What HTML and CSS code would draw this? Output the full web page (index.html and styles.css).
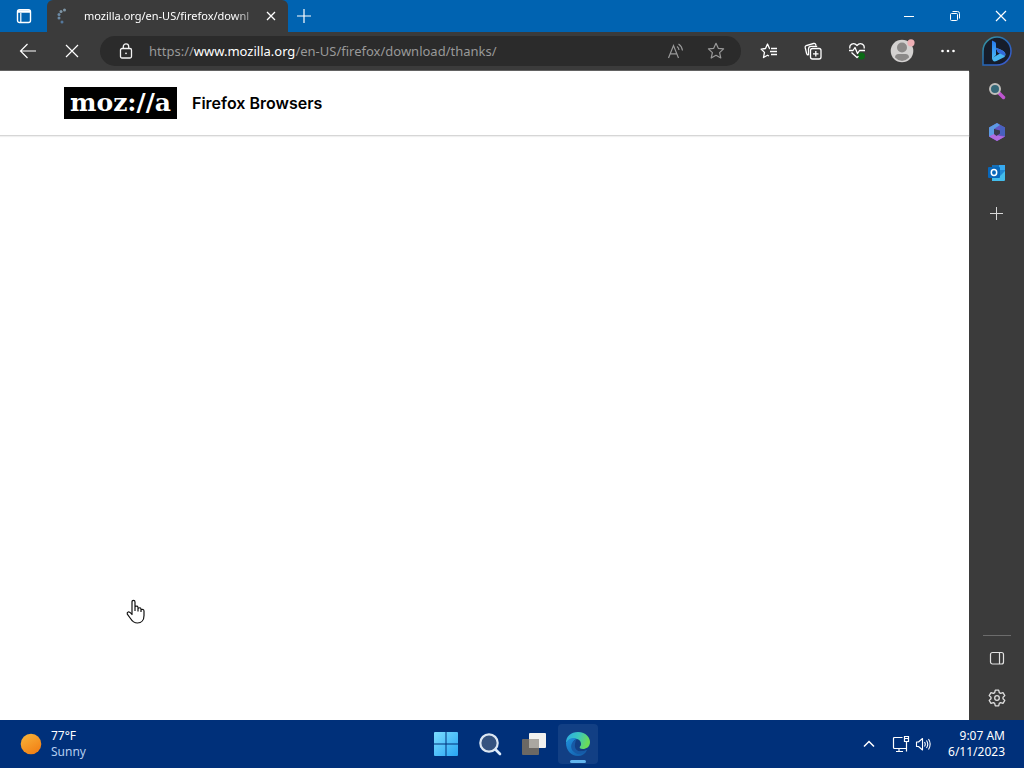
FILE: index.html
```html
<!DOCTYPE html>
<html lang="en">
<head>
<meta charset="utf-8">
<meta name="viewport" content="width=device-width, initial-scale=1">
<title>Firefox Browsers</title>
<link rel="stylesheet" href="styles.css">
</head>
<body>
<header class="titlebar">
  <button class="tab-actions" aria-label="Tab actions menu">
    <svg width="16" height="16" viewBox="0 0 16 16" fill="none" stroke="currentColor"><rect x="1.500" y="1.800" width="13" height="12.700" rx="2" stroke-width="1.400"/><path d="M2 3.500h12" stroke-width="2.500"/><path d="M4.800 5v9" stroke-width="1.200"/></svg>
  </button>
  <div class="tab">
    <svg class="spinner" width="16" height="16" viewBox="0 0 16 16" fill="#7f96a6"><circle cx="9.500" cy="2" r="1.500"/><circle cx="6" cy="3.500" r="1.500"/><circle cx="4" cy="6.500" r="1.500" fill="#6b8aa6"/><circle cx="4" cy="10" r="1.500" fill="#6b8aa6"/><circle cx="7" cy="14" r="1.500" fill="#55789c"/></svg>
    <span class="tab-title">mozilla.org/en-US/firefox/downl</span>
    <button class="tab-close" aria-label="Close tab"><svg width="10" height="10" viewBox="0 0 10 10" stroke="currentColor" stroke-width="1.300"><path d="M1 1l8 8M9 1L1 9"/></svg></button>
  </div>
  <button class="new-tab" aria-label="New tab"><svg width="16" height="16" viewBox="0 0 16 16" stroke="currentColor" stroke-width="1.200"><path d="M8 1v14M1 8h14"/></svg></button>
  <div class="window-controls">
    <button aria-label="Minimize"><svg width="12" height="12" viewBox="0 0 12 12" stroke="currentColor"><path d="M1 6.500h10"/></svg></button>
    <button aria-label="Restore"><svg width="12" height="12" viewBox="0 0 12 12" fill="none" stroke="currentColor"><rect x="1.500" y="3.500" width="7" height="7" rx="1"/><path d="M3.500 1.500h5a2 2 0 0 1 2 2v5"/></svg></button>
    <button aria-label="Close"><svg width="12" height="12" viewBox="0 0 12 12" stroke="currentColor" stroke-width="1.200"><path d="M1 1l10 10M11 1L1 11"/></svg></button>
  </div>
</header>
<div class="browser">
  <div class="content">
    <nav class="toolbar" aria-label="Navigation">
      <button class="tool" aria-label="Back"><svg width="18" height="16" viewBox="0 0 18 16" fill="none" stroke="currentColor" stroke-width="1.200"><path d="M17 8H1.500M8.500 1L1.500 8l7 7"/></svg></button>
      <button class="tool" aria-label="Stop loading"><svg width="14" height="14" viewBox="0 0 14 14" stroke="currentColor" stroke-width="1.200"><path d="M1 1l12 12M13 1L1 13"/></svg></button>
      <div class="address">
        <button class="site-info" aria-label="View site information"><svg width="14" height="16" viewBox="0 0 14 16" fill="none" stroke="currentColor" stroke-width="1.300"><rect x="1.500" y="5.500" width="11" height="9.500" rx="1.500"/><path d="M4.300 5.500V3.500a2.700 2.700 0 0 1 5.400 0v2"/><circle cx="7" cy="10.300" r=".9" fill="currentColor" stroke="none"/></svg></button>
        <div class="url" role="textbox" contenteditable="true" spellcheck="false" aria-label="Address">https://<span class="host">www.mozilla.org</span>/en-US/firefox/download/thanks/</div>
        <button class="address-action" aria-label="Read aloud"><svg width="18" height="16" viewBox="0 0 18 16" fill="none" stroke="currentColor" stroke-width="1.200"><path d="M1.500 15L6.500 2.500 11.500 15M3.200 10.800h6.600"/><path d="M10 3.500Q11.800 4.700 12 7M11.500 1Q14.800 3 15.500 7.500"/></svg></button>
        <button class="address-action" aria-label="Add to favorites"><svg width="18" height="18" viewBox="0 0 18 18" fill="none" stroke="currentColor" stroke-width="1.200" stroke-linejoin="round"><path d="M9 1.300l2.300 5 5.300.6-4 3.700 1.200 5.400L9 13.300 4.200 16l1.200-5.400-4-3.700 5.300-.6z"/></svg></button>
      </div>
      <div class="tools">
        <button class="tool" aria-label="Favorites"><svg width="18" height="18" viewBox="0 0 18 18" fill="none" stroke="currentColor" stroke-width="1.300" stroke-linejoin="round"><path d="M10 6.500H9.500L7.500 2 5.500 6.500l-4.400.6 3.400 3.300L3.500 15.500l4-2.300 1.500.8M11 6.500h6M10 9.500h7M11 12.500h6"/></svg></button>
        <button class="tool" aria-label="Collections"><svg width="18" height="18" viewBox="0 0 18 18" fill="none" stroke="currentColor" stroke-width="1.300"><rect x="6.500" y="6.500" width="10.500" height="10.500" rx="2"/><path d="M11.800 9v5.500M9 11.800h5.500M4.500 13Q3 13 2.600 11.500L1.200 5.500q-.3-1.500 1-2L9.500 1.500q1.500-.4 2.200 1l.3 1M4.500 13V7q0-2.700 2.700-2.700h6"/></svg></button>
        <button class="tool" aria-label="Browser essentials"><svg width="18" height="18" viewBox="0 0 18 18" fill="none" stroke="currentColor" stroke-width="1.300" stroke-linejoin="round"><circle cx="13.500" cy="14" r="3.500" fill="#0b6a16" stroke="none"/><path d="M2 6.500C.800 3 5.500-.500 9 3.500c3.500-4 8.200-.500 7 3M1 8.500h4l2-3 2.500 6 2-3h5.500M3.500 10.500L9 15.500l1.500-1.300"/></svg></button>
        <button class="tool profile" aria-label="Profile"><svg width="26" height="24" viewBox="0 0 26 24"><circle cx="12" cy="12" r="11.300" fill="#d3d1d0"/><circle cx="12" cy="8.500" r="5" fill="#8b8988"/><path d="M5 18.500Q5 15 8.500 15h7q3.500 0 3.500 3.500-7 7-14 0z" fill="#8b8988"/><circle cx="21" cy="3.800" r="3.600" fill="#eeb0b5"/></svg></button>
        <button class="tool" aria-label="Settings and more"><svg width="16" height="16" viewBox="0 0 16 16" fill="currentColor"><circle cx="2.500" cy="8" r="1.300"/><circle cx="8" cy="8" r="1.300"/><circle cx="13.500" cy="8" r="1.300"/></svg></button>
      </div>
    </nav>
    <main class="page">
      <div class="site-header">
        <a class="logo" href="#">moz://a</a>
        <a class="product" href="#">Firefox Browsers</a>
      </div>
      <svg class="cursor" width="20" height="26" viewBox="0 0 20 26" fill="#fff" stroke="#111" stroke-width="1.200" stroke-linejoin="round"><path d="M6 14V3Q6 1.300 7.500 1.300T9 3v6V7.500Q11.800 6.300 12 8.500v1Q14.500 7.800 15 10v.8Q17.800 9.500 18 12v4.500c0 4.500-2.500 7.500-6.500 7.500-4 0-5.500-2-7-4.500L1.300 15.200Q.800 13.500 2.200 13q1.500-.5 3.800 2.500zM9 8.500V12M12 9v3.500M15 10.500V13"/></svg>
    </main>
  </div>
  <aside class="sidebar" aria-label="Edge sidebar">
    <button class="bing" aria-label="Bing chat"><svg width="32" height="32" viewBox="0 0 32 32"><defs><linearGradient id="bing-ring" x2="1" y2="1"><stop offset="0" stop-color="#399c9c"/><stop offset=".5" stop-color="#2467b7"/><stop offset="1" stop-color="#4058d0"/></linearGradient><linearGradient id="bing-mark" x2="0" y2="1"><stop offset="0" stop-color="#2779ed"/><stop offset="1" stop-color="#49baf5"/></linearGradient></defs><path d="M2 30V16A14 14 0 1 1 16 30z" fill="#161d2b" stroke="url(#bing-ring)" stroke-width="1.500"/><path d="M11 5.500l3 1.500q1 .5 1 2v11l-4 4z" fill="url(#bing-mark)"/><path d="M11 23l8-4.500-2-1-2.500-5 6 2.500q6 3 3 7l-8 4q-4 1.500-4.500-3z" fill="#48b5ef"/><path d="M14.500 12.500l6 2.500q5 2.500 3.500 6l-7-3.500z" fill="#3268d8"/></svg></button>
    <button class="side-item" aria-label="Search"><svg width="18" height="18" viewBox="0 0 18 18"><path d="M10.500 10.500l5 5" stroke="#bd55d0" stroke-width="3.500" stroke-linecap="round"/><circle cx="7" cy="7" r="5" fill="#356878" stroke="#c0bebb" stroke-width="2"/></svg></button>
    <button class="side-item" aria-label="Microsoft 365"><svg width="18" height="18" viewBox="0 0 18 18"><path d="M9 0l8 4.500v9L9 18l-8-4.500v-9z" fill="#6555c4"/><path d="M9 0L1 4.500v9L6 12V6l6-4z" fill="#5c9ae2"/><path d="M12 2l5 2.500v9l-5-2V6z" fill="#4861be"/><path d="M1 13.500L6 11l6 2 5 .5L9 18z" fill="#b16ade"/><path d="M6 6l6 1.500v3L8.500 13 6 11z" fill="#3a3b4c"/></svg></button>
    <button class="side-item" aria-label="Outlook"><svg width="18" height="18" viewBox="0 0 18 18"><path d="M4 1h13v13H4z" fill="#2189d5"/><path d="M4 1h7v5H4z" fill="#1670b8"/><path d="M11 1h6v5h-6z" fill="#37aaf0"/><path d="M4 10l8 2 5-5v9q0 1-1 1H4z" fill="#43bdec"/><rect x="0" y="3" width="12" height="11" rx="1" fill="#0867ba"/><ellipse cx="6" cy="8.500" rx="2.700" ry="3" fill="none" stroke="#fff" stroke-width="1.500"/></svg></button>
    <button class="side-item add" aria-label="Customize sidebar"><svg width="13" height="13" viewBox="0 0 13 13" stroke="#d8d8d8"><path d="M6.500 0v13M0 6.500h13"/></svg></button>
    <div class="side-bottom">
      <button class="side-item" aria-label="Hide sidebar"><svg width="16" height="16" viewBox="0 0 16 16" fill="none" stroke="#e2e2e2" stroke-width="1.200"><rect x="1.500" y="2.500" width="13" height="11.500" rx="2"/><path d="M10.500 3v11"/></svg></button>
      <button class="side-item" aria-label="Sidebar settings"><svg width="18" height="18" viewBox="0 0 18 18" fill="none" stroke="#dedede" stroke-width="1.300" stroke-linejoin="round"><circle cx="9" cy="9" r="2.300"/><path d="M7.300 1.200h3.400l.6 2.400 1.300.8 2.400-.8 1.800 3-1.800 1.700v1.400l1.800 1.700-1.800 3-2.400-.8-1.300.8-.6 2.400H7.300l-.6-2.400-1.300-.8-2.400.8-1.800-3L3 9.700V8.300L1.200 6.600l1.800-3 2.400.8 1.300-.8z"/></svg></button>
    </div>
  </aside>
</div>
<footer class="taskbar">
  <button class="weather">
    <svg width="22" height="22" viewBox="0 0 22 22"><defs><linearGradient id="sun" x2=".6" y2="1"><stop offset="0" stop-color="#f8b63b"/><stop offset="1" stop-color="#f28217"/></linearGradient></defs><circle cx="11" cy="11" r="10.300" fill="url(#sun)"/></svg>
    <span class="lines"><span>77°F</span><span class="muted">Sunny</span></span>
  </button>
  <div class="apps">
    <button class="app" aria-label="Start"><svg width="24" height="24" viewBox="0 0 24 24"><defs><linearGradient id="win" x2="1" y2="1"><stop offset="0" stop-color="#7bdcff"/><stop offset="1" stop-color="#27a5f3"/></linearGradient></defs><path d="M0 1q0-1 1-1h10.500v11.500H0zM12.500 0H23q1 0 1 1v10.500H12.500zM0 12.500h11.500V24H1q-1 0-1-1zM12.500 12.500H24V23q0 1-1 1H12.500z" fill="url(#win)"/></svg></button>
    <button class="app" aria-label="Search"><svg width="24" height="24" viewBox="0 0 24 24"><path d="M17 17l5 5" stroke="#dcecff" stroke-width="2.600" stroke-linecap="round"/><circle cx="11" cy="11" r="8.700" fill="#34527f" stroke="#dbe6f2" stroke-width="2.200"/></svg></button>
    <button class="app" aria-label="Task view"><svg width="26" height="24" viewBox="0 0 26 24"><rect x="8" y="1" width="17" height="15" rx="1" fill="#f1f1ef"/><rect x="1" y="7" width="17" height="16" rx="1" fill="#6b6864"/><path d="M8 7h10v9H8z" fill="#aaa7a1"/></svg></button>
    <button class="app active" aria-label="Microsoft Edge"><svg width="26" height="26" viewBox="0 0 26 26"><defs><linearGradient id="edge-top" x2="1" y2=".3"><stop offset="0" stop-color="#2ba9e8"/><stop offset=".55" stop-color="#3bc6bd"/><stop offset="1" stop-color="#6bdc57"/></linearGradient><linearGradient id="edge-base" x2="1" y2="1"><stop offset="0" stop-color="#2090dc"/><stop offset="1" stop-color="#1159a5"/></linearGradient></defs><path d="M1 12C1 5 6 1 13 1c8 0 12 6 12 10 0 5-4 7-7 7-3 0-4-1-3-2.500 2-2 1-6.500-3-7.500C8 7 3 8 1 12z" fill="url(#edge-top)"/><path d="M1 12c2-5 8-6 11-4-4 1-5 4-4 8 1 5 7 6 14 3-2 4-5 6-9 6C6 25 1 19 1 12z" fill="url(#edge-base)"/><path d="M12 8c-6 2-8 9-3 13 3 3 9 3 13-2-7 3-13 1-12-6q0-3 2-5z" fill="#175aa6"/></svg></button>
  </div>
  <div class="tray">
    <button aria-label="Show hidden icons"><svg width="12" height="8" viewBox="0 0 12 8" fill="none" stroke="currentColor" stroke-width="1.500"><path d="M1 6.500l5-5 5 5"/></svg></button>
    <button class="system" aria-label="Network and volume">
      <svg width="18" height="18" viewBox="0 0 18 18" fill="none" stroke="currentColor" stroke-width="1.200"><path d="M10.500 2.500h-8q-1 0-1 1v9q0 1 1 1h12V9M7 14v2.500M4 16.500h7M12.500 1.500h4v5h-4zM14.500 6.500v10M12.500 3.500h4"/></svg>
      <svg width="16" height="16" viewBox="0 0 16 16" fill="none" stroke="currentColor" stroke-width="1.100" stroke-linejoin="round"><path d="M1.500 6v4.500h2L7.500 14V2.500L3.500 6zM9.500 6q1.500 2.200 0 4.500M11.500 4.500q2.500 3.700 0 7.500M13.500 3q3.300 5 0 10.500"/></svg>
    </button>
    <button class="clock lines"><span>9:07 AM</span><span>6/11/2023</span></button>
  </div>
</footer>
</body>
</html>
```

FILE: styles.css
```css
* { box-sizing: border-box; }
body {
  margin: 0;
  height: 100vh;
  display: flex;
  flex-direction: column;
  overflow: hidden;
  background: #3b3b3b;
  color: #fff;
  font: 12px/16px "Noto Sans", "Open Sans", sans-serif;
}
button {
  display: inline-flex;
  align-items: center;
  justify-content: center;
  flex: none;
  margin: 0;
  padding: 0;
  border: 0;
  background: none;
  color: inherit;
  font: inherit;
}
svg { display: block; flex: none; }
a { color: inherit; text-decoration: none; }

.titlebar { display: flex; flex: none; height: 32px; background: #0063b1; }
.tab-actions { width: 47px; }
.tab {
  display: flex;
  align-items: center;
  width: 241px;
  padding: 0 8px;
  background: #3b3b3b;
  border-radius: 6px 6px 0 0;
}
.tab-title {
  flex: 1;
  min-width: 0;
  margin-left: 13px;
  white-space: nowrap;
  font-size: 11px;
  mask-image: linear-gradient(to right, #000 84%, transparent);
}
.tab-close { width: 18px; height: 24px; }
.new-tab { width: 32px; }
.window-controls { display: flex; margin-left: auto; }
.window-controls button { width: 46px; }

.browser { flex: 1; display: flex; min-height: 0; }
.content { flex: 1; min-width: 0; display: flex; flex-direction: column; }
.toolbar {
  display: flex;
  align-items: center;
  flex: none;
  height: 39px;
  padding-left: 6px;
  border-bottom: 1px solid #626262;
}
.tool { width: 44px; height: 32px; }
.tool.profile { width: 48px; }
.tool:last-child { width: 42px; }
.toolbar > .tool { width: 44px; }
.address {
  flex: 1;
  min-width: 0;
  display: flex;
  align-items: center;
  height: 30px;
  margin: 0 6px;
  padding: 0 5px;
  border-radius: 15px;
  background: #2b2b2b;
  color: #999;
}
.site-info { width: 42px; height: 28px; color: #f2f2f2; }
.url {
  flex: 1;
  min-width: 0;
  margin-left: 2px;
  overflow: hidden;
  white-space: nowrap;
  font-size: 13px;
  line-height: 20px;
  outline: 0;
}
.host { color: #fff; }
.address-action { width: 40px; height: 28px; }
.tools { display: flex; }

.page { position: relative; flex: 1; background: #fff; color: #000; }
.site-header {
  display: flex;
  align-items: center;
  gap: 15px;
  height: 65px;
  padding: 0 64px;
  border-bottom: 1px solid #d6d6d6;
  box-shadow: 0 1px 1px #f0f0f0;
}
.logo {
  padding: 0 6px;
  background: #000;
  color: #fff;
  font: bold 25px/32px "DejaVu Serif", serif;
}
.product { font: 600 16px/24px Inter, sans-serif; }
.cursor { position: absolute; left: 126px; top: 528px; }

.sidebar {
  flex: none;
  width: 55px;
  display: flex;
  flex-direction: column;
  align-items: center;
}
.bing { height: 38px; }
.side-item { width: 40px; height: 41px; }
.side-bottom {
  display: flex;
  flex-direction: column;
  margin-top: auto;
  padding: 2px 0;
  border-top: 1px solid #6c6c6c;
  width: 28px;
  align-items: center;
}
.side-bottom .side-item { height: 40px; }

.taskbar {
  flex: none;
  display: grid;
  grid-template-columns: 1fr auto 1fr;
  align-items: center;
  height: 48px;
  background: #00307a;
}
.lines { display: flex; flex-direction: column; }
.weather { justify-self: start; gap: 9px; padding-left: 20px; }
.weather .lines { align-items: flex-start; }
.muted { color: #b5cdee; }
.apps { display: flex; gap: 4px; }
.app { position: relative; width: 40px; height: 40px; border-radius: 4px; }
.active { background: #123f84; }
.active::after {
  content: "";
  position: absolute;
  bottom: 1px;
  width: 16px;
  height: 3px;
  border-radius: 2px;
  background: #62b5ee;
}
.tray { display: flex; align-items: center; justify-self: end; padding-right: 19px; }
.system { gap: 5px; margin: 0 17px; }
.clock { align-items: flex-end; }
```
